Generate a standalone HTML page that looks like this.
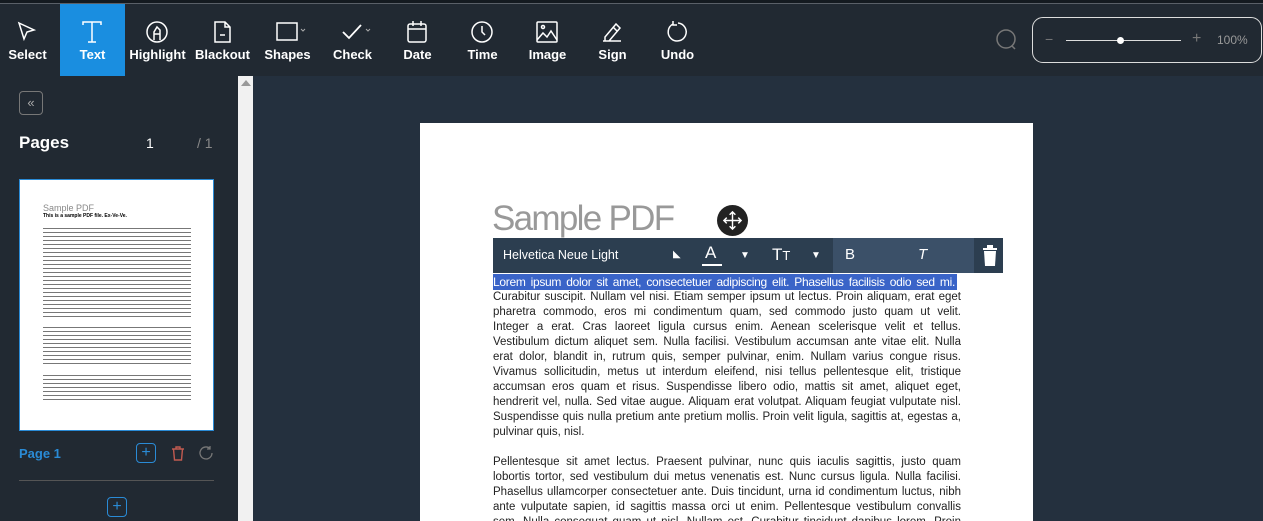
<!DOCTYPE html>
<html style="width:1263px;height:521px;overflow:hidden"><head><style>
*{margin:0;padding:0;box-sizing:border-box}
body{width:1263px;height:521px;overflow:hidden;background:#24303e;font-family:"Liberation Sans",sans-serif;position:relative}
.top{position:absolute;left:0;top:0;width:1263px;height:76px;background:#212932;border-top:3px solid #141a20}
.topline{position:absolute;left:0;top:3px;width:1263px;height:1px;background:#5a6068}
.tb{position:absolute;top:4px;width:65px;height:72px;color:#fff;text-align:center;font-size:13px;font-weight:bold}
.tb svg{position:absolute;left:20px;top:16px}
.tb span{position:absolute;left:0;right:0;top:43px}
.side{position:absolute;left:0;top:76px;width:238px;height:445px;background:#212932}
.scroll{position:absolute;left:238px;top:76px;width:15px;height:445px;background:#f1f1f1}
.page{position:absolute;left:420px;top:123px;width:613px;height:398px;background:#fff}
.tx{position:absolute;left:493px;width:468px;font-size:11.5px;line-height:15px;color:#222;text-align:justify;text-align-last:justify;white-space:nowrap;overflow:hidden}
</style></head><body>
<div class="top"></div><div class="topline"></div>
<div class="tb" style="left:60px;background:#1a8ee0;top:4px"></div>
<div class="tb" style="left:-5px"><svg width="24" height="24" viewBox="0 0 24 24" fill="none" stroke="#fff" stroke-width="1.5"><path d="M4 3l15 7-7 2-3 7z"/></svg><span>Select</span></div>
<div class="tb" style="left:60px"><svg width="24" height="24" viewBox="0 0 24 24" fill="none" stroke="#fff" stroke-width="1.5"><path d="M3 5V2h18v3M12 2v20M8 22h8"/></svg><span>Text</span></div>
<div class="tb" style="left:125px"><svg width="24" height="24" viewBox="0 0 24 24" fill="none" stroke="#fff" stroke-width="1.5"><circle cx="12" cy="12" r="10"/><path d="M9 20v-8l3-5 3 3v10M9 14h6"/></svg><span>Highlight</span></div>
<div class="tb" style="left:190px"><svg width="24" height="24" viewBox="0 0 24 24" fill="none" stroke="#fff" stroke-width="1.5"><path d="M5 2h10l5 5v15H5zM15 2v5h5M10 15h5"/></svg><span>Blackout</span></div>
<div class="tb" style="left:255px"><svg width="34" height="24" viewBox="0 0 34 24" fill="none" stroke="#fff" stroke-width="1.5"><rect x="2" y="3" width="20" height="17"/><path d="M26 9l2 2 2-2" stroke="#aaa" stroke-width="1"/></svg><span>Shapes</span></div>
<div class="tb" style="left:320px"><svg width="34" height="24" viewBox="0 0 34 24" fill="none" stroke="#fff" stroke-width="1.8"><path d="M3 12l6 6 12-13"/><path d="M26 9l2 2 2-2" stroke="#aaa" stroke-width="1"/></svg><span>Check</span></div>
<div class="tb" style="left:385px"><svg width="24" height="24" viewBox="0 0 24 24" fill="none" stroke="#fff" stroke-width="1.5"><rect x="3" y="4" width="18" height="18" rx="2"/><path d="M3 9h18M8 1v5M16 1v5"/></svg><span>Date</span></div>
<div class="tb" style="left:450px"><svg width="24" height="24" viewBox="0 0 24 24" fill="none" stroke="#fff" stroke-width="1.5"><circle cx="12" cy="12" r="10"/><path d="M12 6v6l3 3"/></svg><span>Time</span></div>
<div class="tb" style="left:515px"><svg width="24" height="24" viewBox="0 0 24 24" fill="none" stroke="#fff" stroke-width="1.5"><rect x="2" y="2" width="20" height="20" rx="1"/><circle cx="8" cy="7" r="1.5"/><path d="M2 20l6-7 4 4 4-6 6 9"/></svg><span>Image</span></div>
<div class="tb" style="left:580px"><svg width="24" height="24" viewBox="0 0 24 24" fill="none" stroke="#fff" stroke-width="1.5"><path d="M3 21h18M5 17l11-13 4 4-11 13H5zM13 7l4 4"/></svg><span>Sign</span></div>
<div class="tb" style="left:645px"><svg width="24" height="24" viewBox="0 0 24 24" fill="none" stroke="#fff" stroke-width="1.5"><path d="M8 4a9 9 0 1 0 5-1M8 1v4h4"/></svg><span>Undo</span></div>
<svg style="position:absolute;left:995px;top:28px" width="24" height="24" viewBox="0 0 24 24" fill="none" stroke="#777" stroke-width="1.5"><circle cx="11" cy="11" r="9"/><path d="M17 18l3 3"/></svg>
<div style="position:absolute;left:1032px;top:17px;width:230px;height:46px;border:1px solid #ddd;border-radius:11px"></div>
<div style="position:absolute;left:1045px;top:31px;color:#777;font-size:14px">−</div>
<div style="position:absolute;left:1066px;top:40px;width:115px;height:1px;background:#ddd"></div>
<div style="position:absolute;left:1117px;top:37px;width:7px;height:7px;border-radius:50%;background:#fff"></div>
<div style="position:absolute;left:1192px;top:30px;color:#777;font-size:16px">+</div>
<div style="position:absolute;left:1217px;top:33px;color:#999;font-size:12px">100%</div>

<div class="side"></div>
<div style="position:absolute;left:19px;top:91px;width:24px;height:24px;border:1px solid #777;border-radius:4px;color:#aaa;font-size:13px;text-align:center;line-height:21px">«</div>
<div style="position:absolute;left:19px;top:133px;color:#fff;font-size:17px;font-weight:bold">Pages</div>
<div style="position:absolute;left:146px;top:135px;color:#fff;font-size:14px">1</div>
<div style="position:absolute;left:197px;top:135px;color:#888;font-size:14px">/ 1</div>
<div style="position:absolute;left:19px;top:179px;width:195px;height:252px;background:#fff;border:1px solid #2a8bd6;overflow:hidden">
<div style="position:absolute;left:23px;top:23px;font-size:9px;color:#888">Sample PDF</div>
<div style="position:absolute;left:23px;top:33px;font-size:5px;color:#000;font-weight:bold">This is a sample PDF file. Ex-Ve-Ve.</div>
<div style="position:absolute;left:23px;top:48px;width:148px;height:57px;background:repeating-linear-gradient(#777 0 1px,#fff 1px 4px)"></div>
<div style="position:absolute;left:23px;top:108px;width:148px;height:32px;background:repeating-linear-gradient(#777 0 1px,#fff 1px 4px)"></div>
<div style="position:absolute;left:23px;top:147px;width:148px;height:40px;background:repeating-linear-gradient(#777 0 1px,#fff 1px 4px)"></div>
<div style="position:absolute;left:23px;top:195px;width:148px;height:28px;background:repeating-linear-gradient(#777 0 1px,#fff 1px 4px)"></div>
</div>
<div style="position:absolute;left:19px;top:446px;color:#2a8bd6;font-size:13px;font-weight:bold">Page 1</div>
<div style="position:absolute;left:136px;top:443px;width:20px;height:20px;border:1px solid #2a8bd6;border-radius:4px;color:#2a8bd6;text-align:center;line-height:17px;font-size:16px">+</div>
<svg style="position:absolute;left:171px;top:446px" width="14" height="15" viewBox="0 0 14 15" fill="none" stroke="#c05a50" stroke-width="1.4"><path d="M1 3h12M5 3V1h4v2M2.5 3l1 11h7l1-11"/></svg>
<svg style="position:absolute;left:198px;top:445px" width="16" height="16" viewBox="0 0 16 16" fill="none" stroke="#777" stroke-width="1.3"><path d="M14 8a6 6 0 1 1-2-4.5M12 1v3h-3"/></svg>
<div style="position:absolute;left:19px;top:480px;width:195px;height:1px;background:#555"></div>
<div style="position:absolute;left:107px;top:497px;width:20px;height:20px;border:1px solid #2a8bd6;border-radius:4px;color:#2a8bd6;text-align:center;line-height:17px;font-size:16px">+</div>
<div class="scroll"></div>
<div style="position:absolute;left:241px;top:80px;width:0;height:0;border-left:5px solid transparent;border-right:5px solid transparent;border-bottom:6px solid #999"></div>

<div class="page"></div>
<div style="position:absolute;left:492px;top:199px;font-size:35px;color:#999;letter-spacing:-1.7px">Sample PDF</div>
<div style="position:absolute;left:717px;top:205px;width:31px;height:31px;border-radius:50%;background:#222"></div>
<svg style="position:absolute;left:721px;top:209px" width="23" height="23" viewBox="0 0 24 24" fill="none" stroke="#fff" stroke-width="1.5"><path d="M12 3v18M3 12h18M9 6l3-3 3 3M9 18l3 3 3-3M6 9l-3 3 3 3M18 9l3 3-3 3"/></svg>
<div style="position:absolute;left:493px;top:238px;width:510px;height:35px;background:#2c3e50"></div>
<div style="position:absolute;left:833px;top:238px;width:141px;height:35px;background:#3b5068"></div>
<div style="position:absolute;left:503px;top:248px;color:#fff;font-size:12.5px">Helvetica Neue Light</div>
<div style="position:absolute;left:673px;top:249px;color:#fff;font-size:10px">◣</div>
<div style="position:absolute;left:705px;top:243px;color:#fff;font-size:17px">A</div>
<div style="position:absolute;left:702px;top:264px;width:20px;height:2px;background:#fff"></div>
<div style="position:absolute;left:740px;top:250px;color:#fff;font-size:10px">▼</div>
<div style="position:absolute;left:772px;top:245px;color:#fff;font-size:17px">T<span style="font-size:13px">T</span></div>
<div style="position:absolute;left:811px;top:250px;color:#fff;font-size:10px">▼</div>
<div style="position:absolute;left:845px;top:246px;color:#fff;font-size:15px">B</div>
<div style="position:absolute;left:918px;top:246px;color:#fff;font-size:15px;font-style:italic">T</div>
<svg style="position:absolute;left:982px;top:245px" width="16" height="22" viewBox="0 0 16 22" fill="#fff"><rect x="1" y="3" width="14" height="2"/><rect x="5" y="0" width="6" height="3"/><path d="M2 6h12l-1 15H3z"/></svg>
<div style="position:absolute;left:493px;top:274px;width:464px;height:16px;background:#3a64c8"></div>
<div class="tx" style="top:275px;width:462px;color:#fff;font-size:12px;letter-spacing:-0.3px">Lorem ipsum dolor sit amet, consectetuer adipiscing elit. Phasellus facilisis odio sed mi.</div>
<div class="tx" style="top:290px">Curabitur suscipit. Nullam vel nisi. Etiam semper ipsum ut lectus. Proin aliquam, erat eget</div>
<div class="tx" style="top:305px">pharetra commodo, eros mi condimentum quam, sed commodo justo quam ut velit.</div>
<div class="tx" style="top:320px">Integer a erat. Cras laoreet ligula cursus enim. Aenean scelerisque velit et tellus.</div>
<div class="tx" style="top:335px">Vestibulum dictum aliquet sem. Nulla facilisi. Vestibulum accumsan ante vitae elit. Nulla</div>
<div class="tx" style="top:350px">erat dolor, blandit in, rutrum quis, semper pulvinar, enim. Nullam varius congue risus.</div>
<div class="tx" style="top:365px">Vivamus sollicitudin, metus ut interdum eleifend, nisi tellus pellentesque elit, tristique</div>
<div class="tx" style="top:380px">accumsan eros quam et risus. Suspendisse libero odio, mattis sit amet, aliquet eget,</div>
<div class="tx" style="top:395px">hendrerit vel, nulla. Sed vitae augue. Aliquam erat volutpat. Aliquam feugiat vulputate nisl.</div>
<div class="tx" style="top:410px">Suspendisse quis nulla pretium ante pretium mollis. Proin velit ligula, sagittis at, egestas a,</div>
<div class="tx" style="top:425px;text-align-last:left">pulvinar quis, nisl.</div>
<div class="tx" style="top:455px">Pellentesque sit amet lectus. Praesent pulvinar, nunc quis iaculis sagittis, justo quam</div>
<div class="tx" style="top:470px">lobortis tortor, sed vestibulum dui metus venenatis est. Nunc cursus ligula. Nulla facilisi.</div>
<div class="tx" style="top:485px">Phasellus ullamcorper consectetuer ante. Duis tincidunt, urna id condimentum luctus, nibh</div>
<div class="tx" style="top:500px">ante vulputate sapien, id sagittis massa orci ut enim. Pellentesque vestibulum convallis</div>
<div class="tx" style="top:515px">sem. Nulla consequat quam ut nisl. Nullam est. Curabitur tincidunt dapibus lorem. Proin</div>
</body></html>
